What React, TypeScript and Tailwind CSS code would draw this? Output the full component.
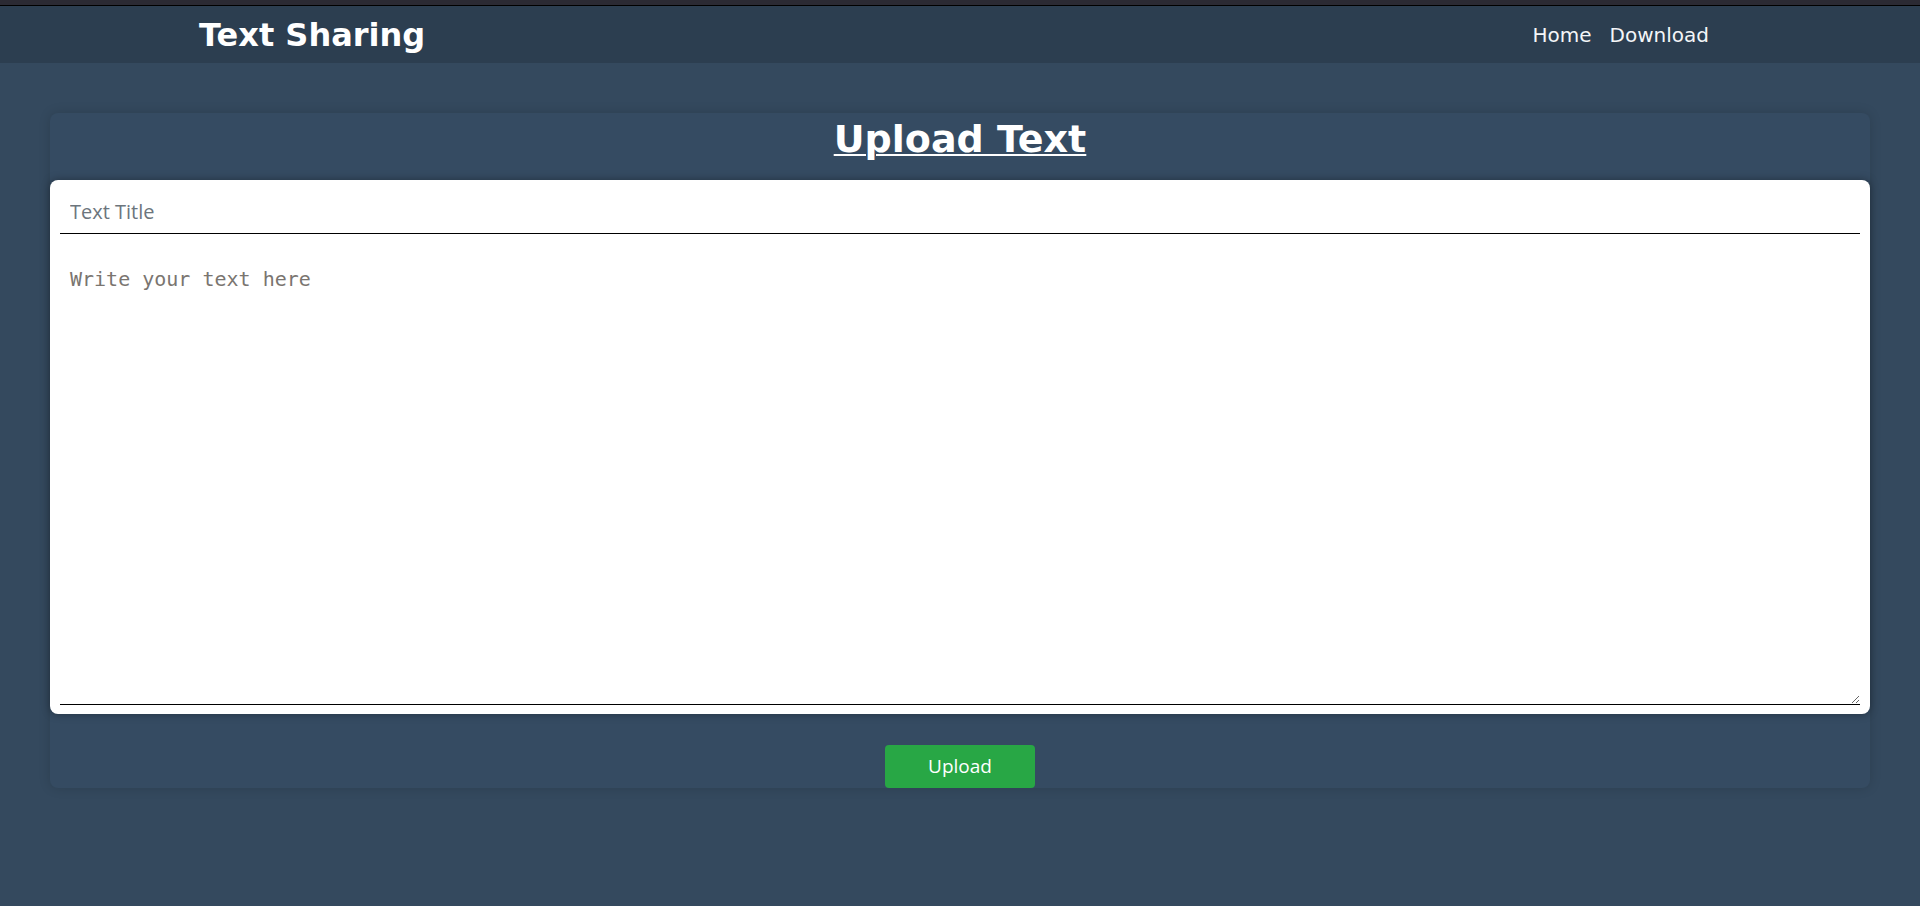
export default function App() {
    return (
        <div className="min-h-screen w-full bg-[#34495e] font-['DejaVu_Sans',sans-serif]">
            {/* top strip */}
            <div className="h-[6px] bg-[#2b2a33] border-b border-black" />

            {/* navbar */}
            <nav className="h-[57px] bg-[#2c3e50] flex items-center justify-between pl-[199px] pr-[211px]">
                <span className="text-[32px] font-bold text-white leading-none pt-[1px]">Text Sharing</span>
                <div className="flex gap-[18px] text-[20px] text-[#f4f6f8]">
                    <a href="#" className="leading-none">Home</a>
                    <a href="#" className="leading-none">Download</a>
                </div>
            </nav>

            <main className="px-[50px] pt-[50px]">
                <div className="rounded-lg bg-[#354b62] shadow-[0_0_12px_rgba(0,0,0,0.15)]">
                    <h1 className="text-center text-[38px] leading-[44px] font-bold text-white underline underline-offset-[2px] decoration-[2px] pt-[4px] pb-[19px]">
                        Upload Text
                    </h1>

                    <form className="bg-white rounded-lg px-[10px] pt-[10px] pb-[9px] shadow-[0_0_8px_rgba(0,0,0,0.35)]">
                        <input
                            type="text"
                            placeholder="Text Title"
                            className="block w-full h-[44px] px-[10px] border-b border-black outline-none text-[20px] font-['Open_Sans',sans-serif] placeholder:text-[#6c757d]"
                        />
                        <textarea
                            placeholder="Write your text here"
                            className="block w-full h-[471px] px-[10px] pt-[33px] border-b border-black outline-none text-[20px] leading-[24px] font-['DejaVu_Sans_Mono',monospace] placeholder:text-[#7a7570]"
                        />
                    </form>

                    <div className="flex justify-center pt-[31px]">
                        <button
                            type="button"
                            className="w-[150px] h-[43px] rounded-[4px] bg-[#28a745] text-white text-[19px] font-['Open_Sans',sans-serif]"
                        >
                            Upload
                        </button>
                    </div>
                </div>
            </main>
        </div>
    )
}
